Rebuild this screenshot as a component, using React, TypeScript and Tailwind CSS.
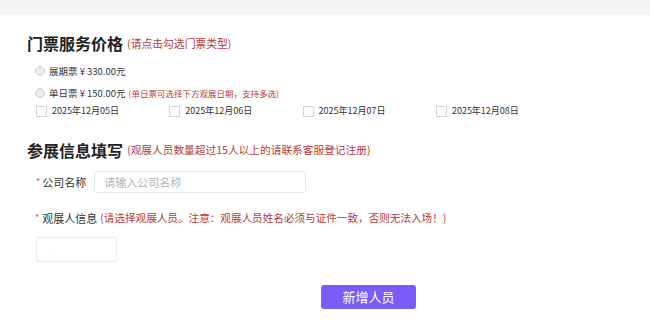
import React from "react";

const dates = ["2025年12月05日", "2025年12月06日", "2025年12月07日", "2025年12月08日"];

const Radio = ({ label, note }: { label: string; note?: string }) => (
  <div className="flex h-[16px] items-center pl-[35px]">
    <span className="h-[10px] w-[10px] rounded-full border border-[#cfd3d8] bg-[#e9ecef]" />
    <span className="ml-[4px] text-[9.5px] leading-[16px] text-[#333]">{label}</span>
    {note && <span className="ml-[3px] text-[8.5px] leading-[16px] text-[#c0392b]">{note}</span>}
  </div>
);

export default function App() {
  return (
    <div
      className="h-[334px] w-full overflow-hidden bg-white"
      style={{ fontFamily: '"Noto Sans CJK SC", "Noto Sans", sans-serif' }}
    >
      <div className="h-[15px] bg-[#f5f5f5]" />

      {/* 门票服务价格 */}
      <div className="mt-[18px] flex h-[20px] items-center pl-[27px]">
        <span className="text-[16px] font-bold leading-[20px] text-[#222]">门票服务价格</span>
        <span className="ml-[4px] text-[10.8px] leading-[20px] text-[#b53c3c]">(请点击勾选门票类型)</span>
      </div>

      <div className="mt-[10px]">
        <Radio label="展期票 ¥ 330.00元" />
      </div>
      <div className="mt-[6px]">
        <Radio label="单日票 ¥ 150.00元" note="(单日票可选择下方观展日期，支持多选)" />
      </div>

      <div className="mt-[3px] flex h-[14px] items-center pl-[36px]">
        {dates.map((d) => (
          <label key={d} className="flex w-[133.3px] items-center">
            <span className="h-[11px] w-[11px] border border-[#d6d6d6] bg-white" />
            <span className="ml-[5px] text-[9px] leading-[14px] text-[#333]">{d}</span>
          </label>
        ))}
      </div>

      {/* 参展信息填写 */}
      <div className="mt-[22px] flex h-[20px] items-center pl-[27px]">
        <span className="text-[16px] font-bold leading-[20px] text-[#222]">参展信息填写</span>
        <span className="ml-[4px] text-[10.7px] leading-[20px] text-[#b53c3c]">
          (观展人员数量超过15人以上的请联系客服登记注册)
        </span>
      </div>

      <div className="mt-[11px] flex h-[22px] items-center pl-[36px]">
        <span className="text-[9px] text-[#e05050]">*</span>
        <span className="ml-[2px] text-[11px] text-[#333]">公司名称</span>
        <input
          className="ml-[8px] h-[22px] w-[212px] rounded-[3px] border border-[#e4e7ed] px-[9px] text-[11px] outline-none placeholder:text-[#b4b4b4]"
          placeholder="请输入公司名称"
        />
      </div>

      <div className="mt-[17px] flex h-[16px] items-center pl-[35px]">
        <span className="text-[9px] text-[#e05050]">*</span>
        <span className="ml-[3px] text-[11px] text-[#333]">观展人信息</span>
        <span className="ml-[3px] text-[10.6px] text-[#b53c3c]">
          (请选择观展人员。注意：观展人员姓名必须与证件一致，否则无法入场！)
        </span>
      </div>

      <div className="ml-[36px] mt-[11px] flex h-[25px] w-[81px] items-center rounded-[2px] border border-[#ebebeb] pl-[15px]">
        <span className="h-[1px] w-[1px] bg-[#ddd]" />
      </div>

      <div className="mt-[21px] pl-[321px]">
        <button className="h-[24px] w-[95px] rounded-[3px] bg-[#7c5cf6] text-[13px] text-white">新增人员</button>
      </div>
    </div>
  );
}
